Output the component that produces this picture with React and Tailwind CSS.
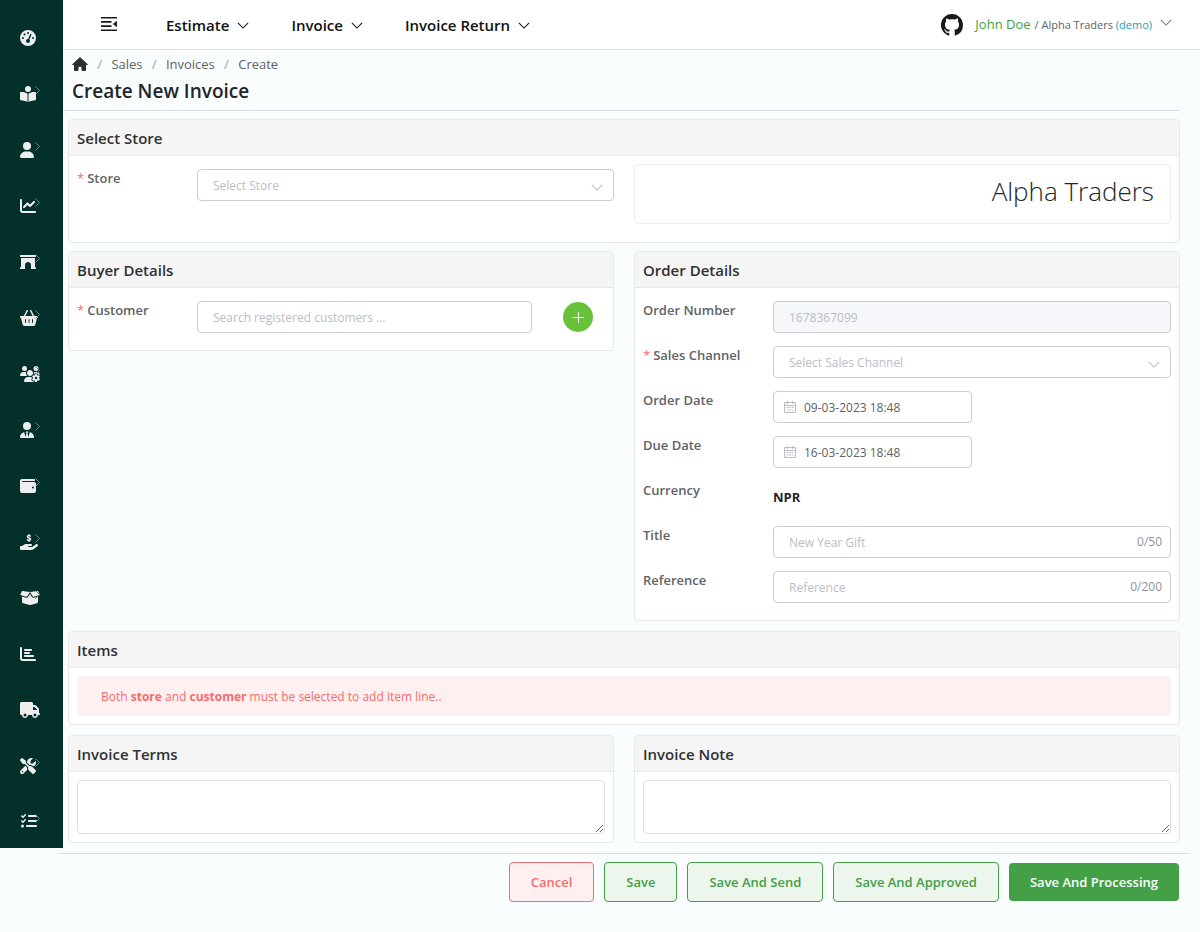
import { useId } from "react";
import {
  FaGaugeHigh, FaBookOpenReader, FaUser, FaChartLine, FaArchway, FaBasketShopping,
  FaUsersGear, FaUserTie, FaWallet, FaHandHoldingDollar, FaBoxOpen, FaChartBar,
  FaTruck, FaScrewdriverWrench, FaListCheck,
} from "react-icons/fa6";

const NAV = [
  ["Dashboard", FaGaugeHigh, "h-4 w-4", false],
  ["Accounting", FaBookOpenReader, "h-4 w-4", true],
  ["Users", FaUser, "h-4 w-3.5", true],
  ["Analytics", FaChartLine, "h-4 w-4", true],
  ["Stores", FaArchway, "h-4 w-4", true],
  ["Sales", FaBasketShopping, "h-4 w-[18px]", true],
  ["Customers", FaUsersGear, "h-4 w-5", true],
  ["Employees", FaUserTie, "h-4 w-3.5", true],
  ["Wallet", FaWallet, "h-4 w-4", true],
  ["Payments", FaHandHoldingDollar, "h-4 w-[18px]", true],
  ["Products", FaBoxOpen, "h-4 w-5", true],
  ["Reports", FaChartBar, "h-4 w-4", false],
  ["Delivery", FaTruck, "h-4 w-5", false],
  ["Tools", FaScrewdriverWrench, "h-4 w-4", true],
  ["Tasks", FaListCheck, "h-4 w-[18px]", true],
];

function Chevron({ className }) {
  return (
    <svg viewBox="0 0 14 8" fill="none" stroke="currentColor" strokeWidth="1.2" className={className} aria-hidden="true">
      <path d="M1 1l6 6 6-6" />
    </svg>
  );
}

function Sidebar() {
  return (
    <nav aria-label="Main" className="flex w-[63px] shrink-0 flex-col bg-[#04302b] pt-2.5">
      {NAV.map(([label, Icon, size, more]) => (
        <a key={label} href="#" aria-label={label} className="relative flex h-14 shrink-0 items-center pl-5 text-[#eeeeee] last:h-[54px]">
          <Icon className={size} />
          {more && (
            <svg viewBox="0 0 5 9" fill="none" stroke="#5a8a94" strokeWidth="1" className="absolute top-5 left-[35px] h-[9px] w-[5px]" aria-hidden="true">
              <path d="M0.5 0.5l4 4-4 4" />
            </svg>
          )}
        </a>
      ))}
    </nav>
  );
}

function TopBar() {
  return (
    <header className="flex h-[50px] items-center justify-between border-b border-[#dcdfe6] bg-white pr-7 pl-[37px]">
      <div className="flex items-center">
        <button aria-label="Collapse menu">
          <svg viewBox="0 0 18 16" fill="none" stroke="#1a1a1a" strokeWidth="1.6" className="mb-0.5 h-4 w-[18px]" aria-hidden="true">
            <path d="M1 1.8h16M1 5.9h10.500M1 10.1h10.500M1 14.2h16" />
            <path d="M17 4.800v6.400l-4.200-3.200z" fill="#1a1a1a" stroke="none" />
          </svg>
        </button>
        <div className="ml-12 flex items-center gap-[42px] pt-0.5 text-[15px] font-semibold text-[#111111]">
          {["Estimate", "Invoice", "Invoice Return"].map((t) => (
            <button key={t} className="flex items-center gap-2">
              {t}
              <Chevron className="h-[7px] w-3" />
            </button>
          ))}
        </div>
      </div>
      <div className="flex items-center">
        <a href="#" aria-label="GitHub" className="mr-3">
          <svg viewBox="0 0 16 16" fill="#191717" className="size-[22px]" aria-hidden="true">
            <path d="M8 0C3.58 0 0 3.58 0 8c0 3.54 2.29 6.53 5.47 7.59.4.07.55-.17.55-.38 0-.19-.01-.82-.01-1.49-2.01.37-2.53-.49-2.69-.94-.09-.23-.48-.94-.82-1.13-.28-.15-.68-.52-.01-.53.63-.01 1.08.58 1.23.82.72 1.21 1.87.87 2.33.66.07-.52.28-.87.51-1.07-1.78-.2-3.64-.89-3.64-3.95 0-.87.31-1.59.82-2.15-.08-.2-.36-1.02.08-2.12 0 0 .67-.21 2.2.82.64-.18 1.32-.27 2-.27s1.36.09 2 .27c1.53-1.04 2.2-.82 2.2-.82.44 1.1.16 1.92.08 2.12.51.56.82 1.27.82 2.15 0 3.07-1.87 3.75-3.65 3.95.29.25.54.73.54 1.48 0 1.07-.01 1.93-.01 2.2 0 .21.15.46.55.38A8.01 8.01 0 0016 8c0-4.42-3.58-8-8-8z" />
          </svg>
        </a>
        <button className="flex items-center text-[11px] text-[#606266]">
          <span className="flex items-baseline gap-1">
            <span className="text-[13px] text-[#43a047]">John Doe</span>
            <span>/ Alpha Traders <span className="text-[#17a2b8]">(demo)</span></span>
          </span>
          <Chevron className="mb-1 ml-2 h-[7px] w-3 text-[#5f7f9a]" />
        </button>
      </div>
    </header>
  );
}

function Card({ title, children, className = "" }) {
  return (
    <section className={`rounded border border-[#e9e9eb] bg-white ${className}`}>
      <h2 className="flex h-9 items-center rounded-t border-b border-[#e9e9eb] bg-[#f5f5f5] px-2 pt-0.5 text-[15px] font-semibold text-[#303133]">{title}</h2>
      {children}
    </section>
  );
}

function Label({ htmlFor, required, children }) {
  return (
    <label htmlFor={htmlFor} className="shrink-0 pt-px text-[13px] leading-5 font-semibold text-[#606266]">
      {required && <span className="mr-[3px] font-normal text-[#f56c6c]">*</span>}
      {children}
    </label>
  );
}

const BOX = "h-8 w-full rounded border border-[#cdced1] bg-white px-[15px] text-xs text-[#606266] placeholder-[#b9bdc6]";

function Select({ id, placeholder }) {
  return (
    <div className="relative w-full">
      <select id={id} defaultValue="" className="h-8 w-full appearance-none rounded border border-[#cdced1] bg-white px-[15px] pt-px text-xs text-[#b9bdc6]">
        <option value="">{placeholder}</option>
      </select>
      <Chevron className="pointer-events-none absolute top-[15px] right-[11px] h-[7px] w-3 text-[#b9bdc6]" />
    </div>
  );
}

function Row({ label, required, children }) {
  const id = useId();
  return (
    <div className="grid h-[45px] grid-cols-[130px_1fr] items-start">
      <Label htmlFor={id} required={required}>{label}</Label>
      <div className="pt-0.5">{children(id)}</div>
    </div>
  );
}

function DateBox({ id, value }) {
  return (
    <div className="relative w-1/2">
      <svg viewBox="0 0 12 12" fill="none" stroke="#b9bdc6" className="absolute top-[10px] left-[11px] size-3" aria-hidden="true">
        <path d="M.5 1.5h11v10H.5zM.5 4.5h11M3.5 0v3M8.5 0v3" />
        <path d="M2.5 6.5h7M2.5 9h7" strokeDasharray="2 .7" />
      </svg>
      <input id={id} defaultValue={value} className="h-8 w-full rounded border border-[#cdced1] bg-white pr-2 pl-[30px] text-xs text-[#606266]" />
    </div>
  );
}

function CountBox({ id, placeholder, count }) {
  return (
    <div className="relative">
      <input id={id} placeholder={placeholder} className={BOX} />
      <span className="absolute top-2 right-[9px] text-xs leading-4 text-[#909399]">{count}</span>
    </div>
  );
}

function Crumbs() {
  return (
    <div className="flex items-center gap-[9px] text-[13px] leading-5 text-[#606266]">
      <a href="#" aria-label="Home">
        <svg viewBox="0 0 16 14" fill="#2c2e31" stroke="#2c2e31" strokeLinejoin="round" className="h-3.5 w-4" aria-hidden="true">
          <path d="M8 .6l7.400 6.900h-1.900v5.900H10V9.300H6v4.100H2.500V7.500H.6z" />
        </svg>
      </a>
      {["Sales", "Invoices", "Create"].map((t) => (
        <span key={t} className="flex gap-[9px]">
          <span className="font-bold text-[#c0c4cc]">/</span>
          <a href="#">{t}</a>
        </span>
      ))}
    </div>
  );
}

const OUTLINE = "h-10 rounded border border-[#43a047] bg-[#ecf6ed] px-[21px] pt-px text-[#43a047]";

export default function App() {
  return (
    <div className="min-h-screen bg-[#fafdfe] font-['Open_Sans','Noto_Sans',sans-serif]">
      <div className="flex">
        <Sidebar />
        <div className="min-w-0 flex-1">
          <TopBar />
          <main className="pr-5 pl-[5px]">
            <div className="-ml-[5px] border-b border-[#dcdfe6] pt-1 pb-[5px] pl-[9px]">
              <Crumbs />
              <h1 className="mt-[3px] text-[19px] leading-7 font-semibold text-[#212529]">Create New Invoice</h1>
            </div>
            <div className="mt-2 grid grid-cols-2 gap-x-5">
              <Card title="Select Store" className="col-span-2 mb-2">
                <div className="grid grid-cols-2 gap-x-5 px-2 pt-2 pb-[18px]">
                  <div className="grid grid-cols-[120px_1fr] items-start pt-[3px]">
                    <Label htmlFor="store" required>Store</Label>
                    <div className="pt-0.5"><Select id="store" placeholder="Select Store" /></div>
                  </div>
                  <div className="h-[60px] rounded border border-[#ebeef5] pr-4 text-right text-[26px] leading-[52px] font-light text-[#212529]">Alpha Traders</div>
                </div>
              </Card>
              <Card title="Buyer Details" className="self-start">
                <div className="flex items-start px-2 pt-[11px] pb-[17px]">
                  <div className="flex w-[120px] shrink-0"><Label htmlFor="customer" required>Customer</Label></div>
                  <div className="flex flex-1 items-center pt-0.5">
                    <input id="customer" placeholder="Search registered customers ..." className={BOX} />
                    <button aria-label="Add customer" className="mr-3 ml-[31px] flex size-[30px] shrink-0 items-center justify-center rounded-full bg-[#67c23a]">
                      <svg viewBox="0 0 11 11" stroke="#ffffff" className="size-[11px]" aria-hidden="true"><path d="M5.500 0v11M0 5.500h11" /></svg>
                    </button>
                  </div>
                </div>
              </Card>
              <Card title="Order Details">
                <div className="px-2 pt-[11px] pb-1.5">
                  <Row label="Order Number">{(id) => <input id={id} disabled defaultValue="1678367099" className="h-8 w-full rounded border border-[#cdced1] bg-[#f5f7fa] px-[15px] text-xs text-[#b9bdc6]" />}</Row>
                  <Row label="Sales Channel" required>{(id) => <Select id={id} placeholder="Select Sales Channel" />}</Row>
                  <Row label="Order Date">{(id) => <DateBox id={id} value="09-03-2023 18:48" />}</Row>
                  <Row label="Due Date">{(id) => <DateBox id={id} value="16-03-2023 18:48" />}</Row>
                  <Row label="Currency">{(id) => <output id={id} className="block text-[13px] leading-8 font-bold text-[#212529]">NPR</output>}</Row>
                  <Row label="Title">{(id) => <CountBox id={id} placeholder="New Year Gift" count="0/50" />}</Row>
                  <Row label="Reference">{(id) => <CountBox id={id} placeholder="Reference" count="0/200" />}</Row>
                </div>
              </Card>
              <Card title="Items" className="col-span-2 mt-2.5">
                <div className="p-2">
                  <p role="alert" className="h-10 rounded bg-[#fef0f0] px-6 text-xs leading-[42px] text-[#f56c6c]">
                    Both <b>store</b> and <b>customer</b> must be selected to add item line..
                  </p>
                </div>
              </Card>
              {["Invoice Terms", "Invoice Note"].map((t) => (
                <Card key={t} title={t} className="mt-2.5">
                  <div className="p-2">
                    <textarea aria-label={t} className="block h-[54px] w-full rounded border border-[#dcdfe6] bg-white px-3 py-1 text-xs" />
                  </div>
                </Card>
              ))}
            </div>
          </main>
        </div>
      </div>
      <footer className="mt-[5px] mr-2.5 ml-[58px] flex items-center justify-end gap-2.5 border-t border-[#dcdfe6] pt-2 pr-[11px] text-[13px] font-semibold">
        <button className="h-10 rounded border border-[#f56c6c] bg-[#fef0f0] px-[21px] pt-px text-[#f56c6c]">Cancel</button>
        <button className={OUTLINE}>Save</button>
        <button className={OUTLINE}>Save And Send</button>
        <button className={OUTLINE}>Save And Approved</button>
        <button className="h-[38px] rounded bg-[#43a047] px-[21px] pt-px text-white">Save And Processing</button>
      </footer>
    </div>
  );
}
